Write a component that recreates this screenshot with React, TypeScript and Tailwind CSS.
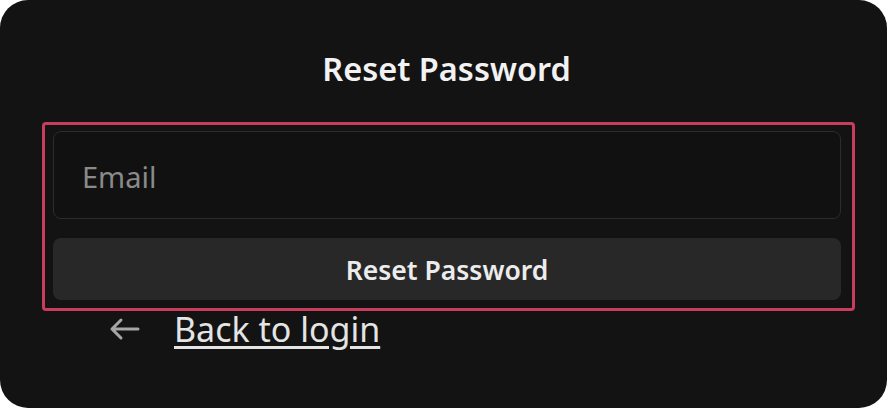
export default function App() {
  return (
    <div className="w-[887px] h-[408px] bg-white" style={{ fontFamily: '"Noto Sans", "Open Sans", sans-serif' }}>
      <div className="h-full rounded-[28px] bg-[#131313] flex flex-col pt-[46px]">
        <h1 className="text-center text-[32.5px] leading-[46px] font-semibold text-[#f2f2f2] pl-[6px]">Reset Password</h1>

        <div className="mt-[30px] ml-[42px] w-[813px] border-[3px] border-[#c83c5c] rounded-[4px] pt-[6px] pb-[8px] pl-[8px] flex flex-col gap-[19px]">
          <div className="w-[788px] h-[88px] rounded-[8px] border border-[#2c2c2c] bg-[#111111] flex items-center pl-[28px] pt-[3px]">
            <span className="text-[29px] text-[#8a8a8a]">Email</span>
          </div>
          <button className="w-[788px] h-[62px] rounded-[8px] bg-[#282828] text-[26.5px] font-semibold text-[#ececec] pt-[3px]">
            Reset Password
          </button>
        </div>

        <div className="flex items-center ml-[109px] mt-[-2px]">
          <svg width="31" height="26" viewBox="0 0 31 26" fill="none" stroke="#a6a6a6" strokeWidth="3" strokeLinecap="round" strokeLinejoin="round">
            <path d="M29 13H3M12 4L3 13l9 9" />
          </svg>
          <a className="ml-[34px] text-[34px] leading-[40px] text-[#e4e4e4] underline underline-offset-[4px]">Back to login</a>
        </div>
      </div>
    </div>
  );
}
